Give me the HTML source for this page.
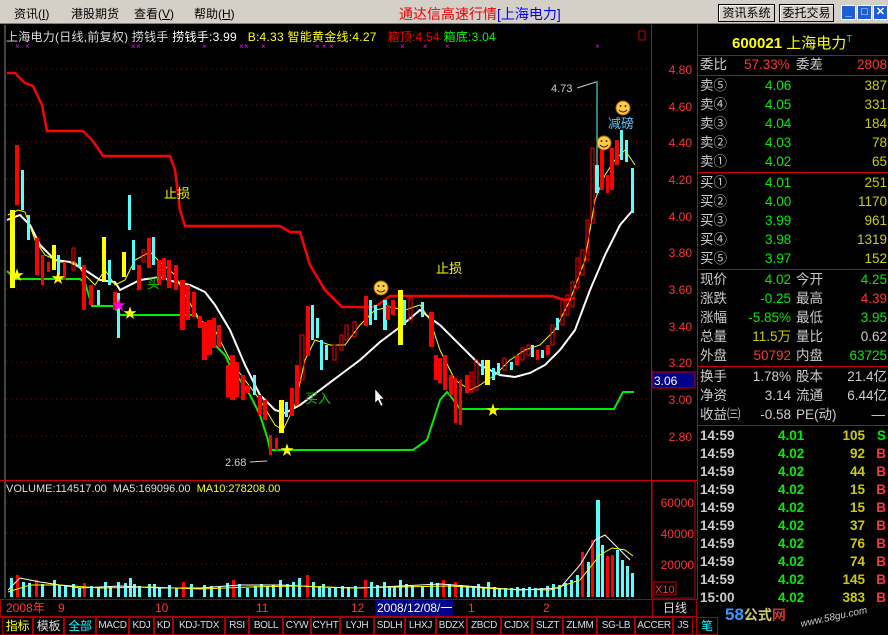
<!DOCTYPE html>
<html><head><meta charset="utf-8">
<style>
*{margin:0;padding:0;box-sizing:border-box}
body{width:888px;height:635px;background:#000;overflow:hidden;position:relative;font-family:"Liberation Sans","WenQuanYi Zen Hei","Noto Sans CJK SC",sans-serif;font-size:12px}
.a{position:absolute;white-space:nowrap}
#menu{left:0;top:0;width:888px;height:24px;background:#d4d0c8;border-bottom:1px solid #808080}
.btn{position:absolute;top:4px;height:18px;border:1px solid #000;background:#d4d0c8;font-size:12px;line-height:16px;text-align:center;box-shadow:inset 1px 1px #fff}
.wb{position:absolute;top:5px;width:15px;height:15px;background:#1c5ed8;border:1px solid #fff;color:#fff;font-size:11px;line-height:13px;text-align:center;font-weight:bold}
#rp{left:697px;top:25px;width:191px;height:575px;border-left:1px solid #c00}
.r{position:absolute;left:0;width:191px;height:19px;font-size:13.5px;line-height:19px}
.r span{position:absolute}
.hl{position:absolute;left:0;width:191px;height:1px;background:#c00}
.tab{position:absolute;top:617px;height:18px;border:1px solid #a00;color:#ddd;font-size:10px;line-height:16px;text-align:center;white-space:nowrap;overflow:hidden;letter-spacing:-0.3px}
</style></head><body>
<div class="a" id="menu">
 <span class="a" style="left:14px;top:5px">资讯(<u>I</u>)</span>
 <span class="a" style="left:71px;top:5px">港股期货</span>
 <span class="a" style="left:134px;top:5px">查看(<u>V</u>)</span>
 <span class="a" style="left:194px;top:5px">帮助(<u>H</u>)</span>
 <span class="a" style="left:399px;top:4px;font-size:14px;color:#e00">通达信高速行情<span style="color:#00f">[上海电力]</span></span>
 <div class="btn" style="left:718px;width:57px">资讯系统</div>
 <div class="btn" style="left:779px;width:55px">委托交易</div>
 <div class="wb" style="left:841px">_</div><div class="wb" style="left:857px">□</div><div class="wb" style="left:873px">✕</div>
</div>

<svg class="a" style="left:0;top:25px" width="697" height="575" viewBox="0 25 697 575">
<g stroke="#a00" stroke-dasharray="1,4" stroke-width="1">
<line x1="6" y1="69" x2="650" y2="69"/><line x1="6" y1="105" x2="650" y2="105"/><line x1="6" y1="142" x2="650" y2="142"/><line x1="6" y1="179" x2="650" y2="179"/><line x1="6" y1="215" x2="650" y2="215"/><line x1="6" y1="252" x2="650" y2="252"/><line x1="6" y1="289" x2="650" y2="289"/><line x1="6" y1="325" x2="650" y2="325"/><line x1="6" y1="362" x2="650" y2="362"/><line x1="6" y1="399" x2="650" y2="399"/><line x1="6" y1="436" x2="650" y2="436"/>
<line x1="6" y1="502" x2="650" y2="502"/><line x1="6" y1="533" x2="650" y2="533"/><line x1="6" y1="564" x2="650" y2="564"/>
</g>
<line x1="5" y1="25" x2="5" y2="598" stroke="#888"/>
<line x1="651.5" y1="25" x2="651.5" y2="598" stroke="#c00"/>
<line x1="0" y1="480.5" x2="697" y2="480.5" stroke="#c00"/>
<rect x="652" y="481" width="43" height="117" fill="none" stroke="#c00"/>
<g fill="#f33" font-size="12" text-anchor="end" font-family="Liberation Sans">
<text x="692" y="74">4.80</text><text x="692" y="111">4.60</text><text x="692" y="147">4.40</text><text x="692" y="184">4.20</text><text x="692" y="221">4.00</text><text x="692" y="257">3.80</text><text x="692" y="294">3.60</text><text x="692" y="331">3.40</text><text x="692" y="367">3.20</text><text x="692" y="404">3.00</text><text x="692" y="441">2.80</text>
<text x="694" y="507">60000</text><text x="694" y="538">40000</text><text x="694" y="569">20000</text>
</g>
<rect x="652" y="372" width="43" height="16" fill="#00008b" stroke="#c00"/>
<text x="654" y="385" fill="#fff" font-size="12">3.06</text>
<rect x="654" y="582" width="22" height="13" fill="none" stroke="#c00"/><text x="655" y="593" fill="#f33" font-size="11">X10</text>
<rect x="639" y="31" width="6" height="9" fill="none" stroke="#c00"/>
<polyline fill="none" stroke="#f00" stroke-width="2.5" points="7,73 15,73 25,83 33,86 42,105 47,131 83,131 93,141 103,156 170,156 175,170 180,210 185,226 280,226 290,232 300,232 310,265 325,290 342,307 375,307 390,296 552,296 565,300 575,298"/>
<polyline fill="none" stroke="#0e0" stroke-width="2" points="7,271 15,279 80,279 85,283 92,306 115,306 120,315 195,315 205,325 215,345 225,355 232,370 240,380 250,395 260,415 268,440 270,450 413,450 427,440 440,400 447,392 452,398 460,409 614,409 623,392 634,392"/>
<polyline fill="none" stroke="#fff" stroke-width="2" points="7,220 20,215 30,225 40,245 55,260 70,262 85,270 100,280 115,282 120,290 140,280 160,277 175,282 190,285 205,292 215,305 230,330 245,365 260,395 275,410 285,413 300,405 320,390 340,375 360,360 380,342 400,327 420,310 430,318 440,325 460,345 480,365 500,375 515,377 530,373 545,365 560,350 575,330 590,290 605,255 620,225 633,210"/>
<polyline fill="none" stroke="#ff0" stroke-width="1" points="8,215 18,210 25,212 35,240 45,255 60,262 75,262 85,275 95,285 105,270 115,285 125,280 135,260 150,252 160,262 175,275 185,295 200,320 215,330 230,360 245,380 260,400 275,425 283,430 295,405 305,360 315,340 330,345 345,345 360,325 375,310 390,307 405,310 420,305 430,320 440,350 455,380 470,390 480,385 495,375 510,360 525,350 540,345 555,330 570,300 585,260 595,200 605,175 615,160 625,150 635,165"/>
<g id="c">
<rect x="10" y="210" width="5" height="78" fill="#ff0"/>
<rect x="15" y="145" width="4" height="60" fill="#f00"/>
<rect x="21" y="170" width="3" height="40" fill="#5ff"/>
<rect x="27" y="215" width="3" height="25" fill="#5ff"/>
<rect x="35" y="238" width="4" height="37" fill="#f00"/>
<rect x="41" y="255" width="3" height="30" fill="#f00"/>
<rect x="47" y="262" width="3" height="10" fill="#f00"/>
<rect x="52" y="245" width="4" height="25" fill="#ff0"/>
<rect x="57" y="255" width="3" height="20" fill="#5ff"/>
<rect x="63" y="262" width="3" height="18" fill="#f00"/>
<rect x="72" y="248" width="3" height="22" fill="none" stroke="#f00"/>
<rect x="78" y="257" width="3" height="10" fill="#5ff"/>
<rect x="82" y="265" width="4" height="45" fill="#f00"/>
<rect x="89" y="285" width="4" height="20" fill="#f00"/>
<rect x="97" y="290" width="3" height="15" fill="#5ff"/>
<rect x="102" y="237" width="4" height="45" fill="#ff0"/>
<rect x="108" y="260" width="3" height="25" fill="#5ff"/>
<rect x="113" y="292" width="4" height="18" fill="#f00"/>
<rect x="117" y="293" width="3" height="45" fill="#5ff"/>
<rect x="122" y="252" width="4" height="25" fill="#ff0"/>
<rect x="128" y="195" width="3" height="35" fill="#5ff"/>
<rect x="132" y="240" width="3" height="30" fill="#5ff"/>
<rect x="137" y="265" width="4" height="25" fill="#f00"/>
<rect x="142" y="250" width="3" height="12" fill="none" stroke="#f00"/>
<rect x="147" y="238" width="4" height="30" fill="#f00"/>
<rect x="152" y="237" width="3" height="28" fill="#5ff"/>
<rect x="157" y="260" width="4" height="25" fill="#f00"/>
<rect x="162" y="258" width="4" height="22" fill="#f00"/>
<rect x="167" y="260" width="4" height="28" fill="#f00"/>
<rect x="174" y="265" width="4" height="25" fill="#f00"/>
<rect x="180" y="280" width="5" height="50" fill="#f00"/>
<rect x="186" y="285" width="4" height="35" fill="#f00"/>
<rect x="192" y="292" width="4" height="25" fill="#f00"/>
<rect x="198" y="316" width="4" height="12" fill="#f00"/>
<rect x="202" y="322" width="5" height="38" fill="#f00"/>
<rect x="207" y="320" width="5" height="35" fill="#f00"/>
<rect x="212" y="318" width="4" height="30" fill="#f00"/>
<rect x="217" y="325" width="4" height="22" fill="#f00"/>
<rect x="226" y="365" width="4" height="32" fill="#f00"/>
<rect x="230" y="355" width="5" height="45" fill="#f00"/>
<rect x="235" y="362" width="4" height="35" fill="#f00"/>
<rect x="241" y="375" width="4" height="25" fill="#f00"/>
<rect x="246" y="385" width="4" height="8" fill="#f00"/>
<rect x="253" y="375" width="3" height="20" fill="#5ff"/>
<rect x="258" y="395" width="4" height="20" fill="#f00"/>
<rect x="263" y="400" width="4" height="20" fill="#f00"/>
<rect x="269" y="435" width="3" height="20" fill="#f00"/>
<rect x="275" y="438" width="3" height="12" fill="#f00"/>
<rect x="279" y="400" width="5" height="33" fill="#ff0"/>
<rect x="285" y="402" width="3" height="15" fill="#5ff"/>
<rect x="290" y="388" width="4" height="28" fill="#f00"/>
<rect x="295" y="365" width="4" height="40" fill="#f00"/>
<rect x="300" y="335" width="4" height="45" fill="none" stroke="#f00"/>
<rect x="306" y="306" width="4" height="50" fill="#f00"/>
<rect x="311" y="305" width="3" height="35" fill="#5ff"/>
<rect x="316" y="318" width="3" height="20" fill="#5ff"/>
<rect x="320" y="340" width="3" height="30" fill="#5ff"/>
<rect x="325" y="345" width="3" height="15" fill="#5ff"/>
<rect x="333" y="345" width="3" height="15" fill="none" stroke="#f00"/>
<rect x="340" y="335" width="3" height="15" fill="none" stroke="#f00"/>
<rect x="345" y="325" width="3" height="15" fill="none" stroke="#f00"/>
<rect x="353" y="322" width="3" height="15" fill="none" stroke="#f00"/>
<rect x="364" y="296" width="4" height="30" fill="#f00"/>
<rect x="369" y="300" width="3" height="25" fill="#5ff"/>
<rect x="374" y="305" width="3" height="15" fill="#5ff"/>
<rect x="383" y="300" width="4" height="30" fill="#5ff"/>
<rect x="386" y="305" width="4" height="15" fill="#f00"/>
<rect x="391" y="300" width="4" height="15" fill="#f00"/>
<rect x="398" y="290" width="5" height="55" fill="#ff0"/>
<rect x="403" y="300" width="3" height="25" fill="#5ff"/>
<rect x="409" y="298" width="3" height="22" fill="none" stroke="#f00"/>
<rect x="421" y="302" width="3" height="15" fill="#5ff"/>
<rect x="429" y="312" width="5" height="35" fill="#f00"/>
<rect x="434" y="355" width="4" height="25" fill="#f00"/>
<rect x="438" y="358" width="4" height="25" fill="#f00"/>
<rect x="443" y="355" width="4" height="35" fill="#f00"/>
<rect x="449" y="375" width="4" height="20" fill="#f00"/>
<rect x="454" y="378" width="3" height="45" fill="#f00"/>
<rect x="459" y="380" width="3" height="45" fill="#f00"/>
<rect x="465" y="375" width="4" height="18" fill="#f00"/>
<rect x="470" y="372" width="3" height="20" fill="none" stroke="#f00"/>
<rect x="475" y="360" width="3" height="30" fill="none" stroke="#f00"/>
<rect x="481" y="360" width="3" height="15" fill="#5ff"/>
<rect x="485" y="360" width="5" height="25" fill="#ff0"/>
<rect x="492" y="368" width="3" height="12" fill="#5ff"/>
<rect x="497" y="363" width="3" height="12" fill="#5ff"/>
<rect x="503" y="358" width="3" height="12" fill="none" stroke="#f00"/>
<rect x="510" y="362" width="3" height="8" fill="#5ff"/>
<rect x="515" y="355" width="4" height="10" fill="#f00"/>
<rect x="521" y="348" width="3" height="12" fill="none" stroke="#f00"/>
<rect x="527" y="345" width="3" height="10" fill="none" stroke="#f00"/>
<rect x="531" y="345" width="3" height="12" fill="#5ff"/>
<rect x="536" y="350" width="3" height="10" fill="#f00"/>
<rect x="541" y="350" width="3" height="8" fill="#5ff"/>
<rect x="546" y="345" width="4" height="10" fill="#f00"/>
<rect x="551" y="325" width="3" height="20" fill="none" stroke="#f00"/>
<rect x="556" y="318" width="3" height="12" fill="#5ff"/>
<rect x="561" y="300" width="3" height="25" fill="none" stroke="#f00"/>
<rect x="566" y="295" width="3" height="20" fill="none" stroke="#f00"/>
<rect x="571" y="282" width="3" height="25" fill="none" stroke="#f00"/>
<rect x="576" y="258" width="3" height="30" fill="none" stroke="#f00"/>
<rect x="581" y="250" width="3" height="25" fill="none" stroke="#f00"/>
<rect x="586" y="220" width="3" height="40" fill="none" stroke="#f00"/>
<rect x="591" y="148" width="3" height="75" fill="none" stroke="#f00"/>
<line x1="597" y1="81" x2="597" y2="195" stroke="#5ff"/>
<rect x="595" y="165" width="4" height="28" fill="#5ff"/>
<rect x="600" y="150" width="4" height="40" fill="#f00"/>
<rect x="606" y="175" width="3" height="18" fill="#f00"/>
<rect x="610" y="148" width="4" height="42" fill="#f00"/>
<rect x="615" y="140" width="4" height="25" fill="#f00"/>
<rect x="620" y="130" width="3" height="30" fill="#5ff"/>
<rect x="625" y="140" width="3" height="22" fill="#5ff"/>
<rect x="631" y="168" width="3" height="45" fill="#5ff"/>
</g>
<g fill="#5ff">
<path d="M10 578h3v19h-3zM16 575h3v22h-3zM22 582h3v15h-3zM28 583h3v14h-3zM35 580h3v17h-3zM41 584h3v13h-3zM53 580h3v17h-3zM58 585h3v12h-3zM64 586h3v11h-3zM72 584h3v13h-3zM78 588h3v9h-3zM83 583h3v14h-3zM90 586h3v11h-3zM97 588h3v9h-3zM104 582h3v15h-3zM109 586h3v11h-3zM117 582h3v15h-3zM124 583h3v14h-3zM129 578h3v19h-3zM133 584h3v13h-3zM138 586h3v11h-3zM148 584h3v13h-3zM153 584h3v13h-3zM158 588h3v9h-3zM168 585h3v12h-3zM175 588h3v9h-3zM182 582h3v15h-3zM190 584h3v13h-3zM203 585h3v12h-3zM210 586h3v11h-3zM218 587h3v10h-3zM226 583h3v14h-3zM232 580h3v17h-3zM238 584h3v13h-3zM246 588h3v9h-3zM254 586h3v11h-3zM260 584h3v13h-3zM266 586h3v11h-3zM272 585h3v12h-3zM279 580h3v17h-3zM286 584h3v13h-3zM292 582h3v15h-3zM298 578h3v19h-3zM306 575h3v22h-3zM312 582h3v15h-3zM318 586h3v11h-3zM322 584h3v13h-3zM328 588h3v9h-3zM334 587h3v10h-3zM341 586h3v11h-3zM347 587h3v10h-3zM354 586h3v11h-3zM364 580h3v17h-3zM370 582h3v15h-3zM376 585h3v12h-3zM383 582h3v15h-3zM388 586h3v11h-3zM393 586h3v11h-3zM399 580h3v17h-3zM405 584h3v13h-3zM411 586h3v11h-3zM421 587h3v10h-3zM430 582h3v15h-3zM436 583h3v14h-3zM442 580h3v17h-3zM448 584h3v13h-3zM454 582h3v15h-3zM460 585h3v12h-3zM466 586h3v11h-3zM472 586h3v11h-3zM477 584h3v13h-3zM482 587h3v10h-3zM487 582h3v15h-3zM493 587h3v10h-3zM498 588h3v9h-3zM504 588h3v9h-3zM510 588h3v9h-3zM516 587h3v10h-3zM522 588h3v9h-3zM528 587h3v10h-3zM534 588h3v9h-3zM540 588h3v9h-3zM546 586h3v11h-3zM552 584h3v13h-3zM558 585h3v12h-3zM564 583h3v14h-3zM570 580h3v17h-3zM576 575h3v22h-3zM581 552h3v45h-3zM587 562h3v35h-3zM591 540h3v57h-3zM596 500h4v97h-4zM601 545h3v52h-3zM606 556h3v41h-3zM611 555h3v42h-3zM616 550h3v47h-3zM621 560h3v37h-3zM626 566h3v31h-3zM631 573h3v24h-3z"/>
</g>
<g fill="#f00"><path d="M16 575h3v22h-3zM35 580h3v17h-3zM83 583h3v14h-3zM182 582h3v15h-3zM232 580h3v17h-3zM306 575h3v22h-3zM364 580h3v17h-3zM442 580h3v17h-3zM454 582h3v15h-3zM581 552h3v45h-3zM591 540h3v57h-3zM606 556h3v41h-3zM611 555h3v42h-3z"/></g>
<polyline fill="none" stroke="#fff" points="8,590 20,578 40,582 80,588 120,586 160,588 200,588 240,585 280,585 320,587 360,588 400,586 440,584 480,587 520,590 560,588 580,565 595,540 605,535 615,545 630,560"/>
<polyline fill="none" stroke="#ff0" points="8,592 30,585 60,585 100,588 150,587 200,589 250,587 300,586 350,588 400,587 450,586 500,589 550,590 580,580 600,555 612,548 625,550 633,556"/>
<g fill="#ff0" font-size="14">
<text x="10" y="280">★</text><text x="51" y="283">★</text><text x="123" y="318">★</text><text x="280" y="455">★</text><text x="486" y="415">★</text>
</g>
<text x="112" y="310" fill="#f0f" font-size="14">★</text>
<g font-size="13" font-family="WenQuanYi Zen Hei,sans-serif">
<text x="164" y="198" fill="#ff0">止损</text><text x="436" y="273" fill="#ff0">止损</text>
<text x="147" y="288" fill="#0c0">买</text><text x="305" y="403" fill="#0c0">买入</text>
<text x="608" y="128" fill="#5cf">减磅</text>
</g>
<g id="sm">
<g fill="#fc4" stroke="#a60"><circle cx="381" cy="288" r="7"/><circle cx="604" cy="143" r="7"/><circle cx="623" cy="108" r="7"/></g>
<g fill="#520"><circle cx="378.5" cy="286" r="1"/><circle cx="383.5" cy="286" r="1"/><circle cx="601.5" cy="141" r="1"/><circle cx="606.5" cy="141" r="1"/><circle cx="620.5" cy="106" r="1"/><circle cx="625.5" cy="106" r="1"/></g>
<g fill="none" stroke="#520"><path d="M377 290q4 4 8 0M600 145q4 4 8 0M619 110q4 4 8 0"/></g>
</g>
<text x="551" y="92" fill="#ccc" font-size="11">4.73</text><line x1="577" y1="88" x2="596" y2="82" stroke="#ccc"/>
<text x="225" y="466" fill="#ccc" font-size="11">2.68</text><line x1="250" y1="462" x2="267" y2="461" stroke="#ccc"/>
<path d="M375 389v14l3-3 3 6 2-1-3-6h4z" fill="#fff" stroke="#000" stroke-width=".5"/>
<g fill="#f0f" font-size="8"><text x="15" y="49">×</text><text x="25" y="49">×</text><text x="131" y="49">×</text><text x="136" y="49">×</text><text x="202" y="49">×</text><text x="239" y="49">×</text><text x="244" y="49">×</text><text x="261" y="49">×</text><text x="315" y="49">× ×</text><text x="329" y="49">×</text><text x="400" y="49">×</text><text x="423" y="49">×</text><text x="445" y="49">×</text><text x="595" y="49">×</text></g>
</svg>

<div class="a" style="left:6px;top:28px;color:#ddd;letter-spacing:0.25px">上海电力(日线,前复权) 捞钱手 <span style="color:#fff">捞钱手:3.99</span> <span style="color:#ff0">&nbsp;&nbsp;B:4.33 智能黄金线:4.27</span> <span style="color:#f00">&nbsp;&nbsp;箱顶:4.54</span> <span style="color:#0f0">箱底:3.04</span></div>
<div class="a" style="left:6px;top:483px;color:#ddd;font-size:11px">VOLUME:114517.00 &nbsp;MA5:169096.00 &nbsp;<span style="color:#ff0">MA10:278208.00</span></div>

<div class="a" id="rp">
 <div class="a" style="left:34px;top:7px;color:#ff0;font-size:15px"><b>600021</b> 上海电力<sup style="color:#0cf;font-size:10px">T</sup></div>
 <div class="hl" style="top:30px"></div>
 <div class="r" style="top:30px;color:#ccc"><span style="left:2px">委比</span><span style="left:46px;color:#f33">57.33%</span><span style="left:98px">委差</span><span style="right:2px;color:#f33">2808</span></div>
 <div class="hl" style="top:50px"></div>
 <div class="r" style="top:51px;color:#ccc"><span style="left:2px">卖⑤</span><span style="left:67px;color:#0e0">4.06</span><span style="right:2px;color:#cc0">387</span></div>
 <div class="r" style="top:70px;color:#ccc"><span style="left:2px">卖④</span><span style="left:67px;color:#0e0">4.05</span><span style="right:2px;color:#cc0">331</span></div>
 <div class="r" style="top:89px;color:#ccc"><span style="left:2px">卖③</span><span style="left:67px;color:#0e0">4.04</span><span style="right:2px;color:#cc0">184</span></div>
 <div class="r" style="top:108px;color:#ccc"><span style="left:2px">卖②</span><span style="left:67px;color:#0e0">4.03</span><span style="right:2px;color:#cc0">78</span></div>
 <div class="r" style="top:127px;color:#ccc"><span style="left:2px">卖①</span><span style="left:67px;color:#0e0">4.02</span><span style="right:2px;color:#cc0">65</span></div>
 <div class="hl" style="top:147px"></div>
 <div class="r" style="top:148px;color:#ccc"><span style="left:2px">买①</span><span style="left:67px;color:#0e0">4.01</span><span style="right:2px;color:#cc0">251</span></div>
 <div class="r" style="top:167px;color:#ccc"><span style="left:2px">买②</span><span style="left:67px;color:#0e0">4.00</span><span style="right:2px;color:#cc0">1170</span></div>
 <div class="r" style="top:186px;color:#ccc"><span style="left:2px">买③</span><span style="left:67px;color:#0e0">3.99</span><span style="right:2px;color:#cc0">961</span></div>
 <div class="r" style="top:205px;color:#ccc"><span style="left:2px">买④</span><span style="left:67px;color:#0e0">3.98</span><span style="right:2px;color:#cc0">1319</span></div>
 <div class="r" style="top:224px;color:#ccc"><span style="left:2px">买⑤</span><span style="left:67px;color:#0e0">3.97</span><span style="right:2px;color:#cc0">152</span></div>
 <div class="hl" style="top:244px"></div>
 <div class="r" style="top:245px;color:#ccc"><span style="left:2px">现价</span><span style="right:98px;color:#0e0">4.02</span><span style="left:98px">今开</span><span style="right:2px;color:#0e0">4.25</span></div>
 <div class="r" style="top:264px;color:#ccc"><span style="left:2px">涨跌</span><span style="right:98px;color:#0e0">-0.25</span><span style="left:98px">最高</span><span style="right:2px;color:#f33">4.39</span></div>
 <div class="r" style="top:283px;color:#ccc"><span style="left:2px">涨幅</span><span style="right:98px;color:#0e0">-5.85%</span><span style="left:98px">最低</span><span style="right:2px;color:#0e0">3.95</span></div>
 <div class="r" style="top:302px;color:#ccc"><span style="left:2px">总量</span><span style="right:98px;color:#cc0">11.5万</span><span style="left:98px">量比</span><span style="right:2px">0.62</span></div>
 <div class="r" style="top:321px;color:#ccc"><span style="left:2px">外盘</span><span style="right:98px;color:#f33">50792</span><span style="left:98px">内盘</span><span style="right:2px;color:#0e0">63725</span></div>
 <div class="hl" style="top:341px"></div>
 <div class="r" style="top:342px;color:#ccc"><span style="left:2px">换手</span><span style="right:98px">1.78%</span><span style="left:98px">股本</span><span style="right:2px">21.4亿</span></div>
 <div class="r" style="top:361px;color:#ccc"><span style="left:2px">净资</span><span style="right:98px">3.14</span><span style="left:98px">流通</span><span style="right:2px">6.44亿</span></div>
 <div class="r" style="top:380px;color:#ccc"><span style="left:2px">收益㈢</span><span style="right:98px">-0.58</span><span style="left:98px">PE(动)</span><span style="right:4px">—</span></div>
 <div class="hl" style="top:400px"></div>
 <div class="r" style="top:401px;color:#ccc;font-weight:bold"><span style="left:2px">14:59</span><span style="left:80px;color:#0e0">4.01</span><span style="right:24px;color:#cc0">105</span><span style="right:3px;color:#0e0">S</span></div>
 <div class="r" style="top:419px;color:#ccc;font-weight:bold"><span style="left:2px">14:59</span><span style="left:80px;color:#0e0">4.02</span><span style="right:24px;color:#cc0">92</span><span style="right:3px;color:#f33">B</span></div>
 <div class="r" style="top:437px;color:#ccc;font-weight:bold"><span style="left:2px">14:59</span><span style="left:80px;color:#0e0">4.02</span><span style="right:24px;color:#cc0">44</span><span style="right:3px;color:#f33">B</span></div>
 <div class="r" style="top:455px;color:#ccc;font-weight:bold"><span style="left:2px">14:59</span><span style="left:80px;color:#0e0">4.02</span><span style="right:24px;color:#cc0">15</span><span style="right:3px;color:#f33">B</span></div>
 <div class="r" style="top:473px;color:#ccc;font-weight:bold"><span style="left:2px">14:59</span><span style="left:80px;color:#0e0">4.02</span><span style="right:24px;color:#cc0">15</span><span style="right:3px;color:#f33">B</span></div>
 <div class="r" style="top:491px;color:#ccc;font-weight:bold"><span style="left:2px">14:59</span><span style="left:80px;color:#0e0">4.02</span><span style="right:24px;color:#cc0">37</span><span style="right:3px;color:#f33">B</span></div>
 <div class="r" style="top:509px;color:#ccc;font-weight:bold"><span style="left:2px">14:59</span><span style="left:80px;color:#0e0">4.02</span><span style="right:24px;color:#cc0">76</span><span style="right:3px;color:#f33">B</span></div>
 <div class="r" style="top:527px;color:#ccc;font-weight:bold"><span style="left:2px">14:59</span><span style="left:80px;color:#0e0">4.02</span><span style="right:24px;color:#cc0">74</span><span style="right:3px;color:#f33">B</span></div>
 <div class="r" style="top:545px;color:#ccc;font-weight:bold"><span style="left:2px">14:59</span><span style="left:80px;color:#0e0">4.02</span><span style="right:24px;color:#cc0">145</span><span style="right:3px;color:#f33">B</span></div>
 <div class="r" style="top:563px;color:#ccc;font-weight:bold"><span style="left:2px">15:00</span><span style="left:80px;color:#0e0">4.02</span><span style="right:24px;color:#cc0">383</span><span style="right:3px;color:#f33">B</span></div>
</div>

<div class="a" style="left:0;top:599px;width:697px;height:18px;border:1px solid #a00;color:#f33;font-size:12px;line-height:16px">
 <span class="a" style="left:5px">2008年</span><span class="a" style="left:57px">9</span><span class="a" style="left:154px">10</span><span class="a" style="left:255px">11</span><span class="a" style="left:350px">12</span>
 <span class="a" style="left:374px;top:0;width:78px;height:16px;background:#00008b;color:#fff;padding-left:2px">2008/12/08/一</span>
 <span class="a" style="left:467px">1</span><span class="a" style="left:542px">2</span>
 <span class="a" style="left:651px;width:45px;text-align:center;color:#ddd;border-left:1px solid #a00">日线</span>
</div>
<div class="tab" style="left:2px;width:31px;color:#ff0;font-size:12px">指标</div>
<div class="tab" style="left:33px;width:31px;font-size:12px">模板</div>
<div class="tab" style="left:64px;width:32px;color:#0ff;font-size:12px">全部</div>
<div class="tab" style="left:96px;width:33px">MACD</div>
<div class="tab" style="left:129px;width:25px">KDJ</div>
<div class="tab" style="left:154px;width:19px">KD</div>
<div class="tab" style="left:173px;width:52px">KDJ-TDX</div>
<div class="tab" style="left:225px;width:24px">RSI</div>
<div class="tab" style="left:249px;width:34px">BOLL</div>
<div class="tab" style="left:283px;width:28px">CYW</div>
<div class="tab" style="left:311px;width:29px">CYHT</div>
<div class="tab" style="left:340px;width:34px">LYJH</div>
<div class="tab" style="left:374px;width:31px">SDLH</div>
<div class="tab" style="left:405px;width:31px">LHXJ</div>
<div class="tab" style="left:436px;width:31px">BDZX</div>
<div class="tab" style="left:467px;width:34px">ZBCD</div>
<div class="tab" style="left:501px;width:31px">CJDX</div>
<div class="tab" style="left:532px;width:31px">SLZT</div>
<div class="tab" style="left:563px;width:34px">ZLMM</div>
<div class="tab" style="left:597px;width:38px">SG-LB</div>
<div class="tab" style="left:635px;width:38px">ACCER</div>
<div class="tab" style="left:673px;width:20px">JS</div>
<div class="tab" style="left:696px;width:22px;color:#0ff;font-size:12px">笔</div>
<div class="a" style="left:725px;top:605px;font-size:17px;font-weight:bold;color:#39f">58<span style="color:#cc6;font-size:14px">公式</span><span style="color:#c33;font-size:14px">网</span></div>
<div class="a" style="left:800px;top:612px;font-size:10px;color:#ccc;font-style:italic;transform:rotate(-12deg)">www.58gu.com</div>
</body></html>
